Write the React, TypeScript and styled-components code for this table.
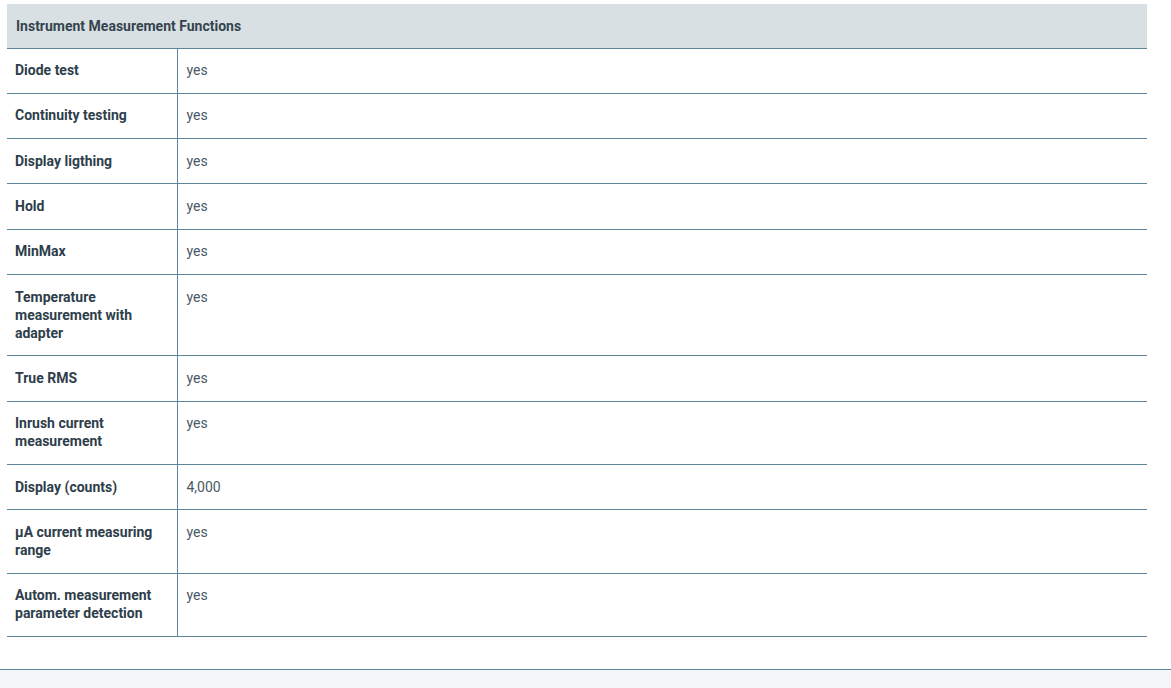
import React from "react";
import styled, { createGlobalStyle } from "styled-components";

const Colors = {
  border: "#5e8599",
  headerBg: "#d9e0e4",
  label: "#2e3e4b",
  value: "#4a5965",
  footerBg: "#f4f6f7",
};

const rows: [string, string][] = [
  ["Diode test", "yes"],
  ["Continuity testing", "yes"],
  ["Display ligthing", "yes"],
  ["Hold", "yes"],
  ["MinMax", "yes"],
  ["Temperature measurement with adapter", "yes"],
  ["True RMS", "yes"],
  ["Inrush current measurement", "yes"],
  ["Display (counts)", "4,000"],
  ["µA current measuring range", "yes"],
  ["Autom. measurement parameter detection", "yes"],
];

const GlobalStyle = createGlobalStyle`
  html, body {
    margin: 0;
    padding: 0;
    background: #ffffff;
    font-family: Roboto, "Liberation Sans", Arial, sans-serif;
  }
`;

const App: React.FunctionComponent = (): JSX.Element => {
  return (
    <>
      <GlobalStyle />
      <Page>
        <Content>
          <SpecTable>
            <colgroup>
              <LabelCol />
              <col />
            </colgroup>
            <thead>
              <tr>
                <HeaderCell colSpan={2}>Instrument Measurement Functions</HeaderCell>
              </tr>
            </thead>
            <tbody>
              {rows.map(([label, value]) => (
                <Row key={label}>
                  <LabelCell>{label}</LabelCell>
                  <ValueCell>{value}</ValueCell>
                </Row>
              ))}
            </tbody>
          </SpecTable>
        </Content>
        <Footer />
      </Page>
    </>
  );
};
export default App;

const Page = styled.div`
  display: flex;
  flex-direction: column;
  min-height: 688px;
`;

const Content = styled.div`
  padding: 4px 24px 32px 7px;
`;

const SpecTable = styled.table`
  width: 1140px;
  border-collapse: collapse;
  table-layout: fixed;
  font-size: 14px;
  line-height: 18px;
`;

const LabelCol = styled.col`
  width: 170px;
`;

const HeaderCell = styled.th`
  background: ${Colors.headerBg};
  color: #34444f;
  font-weight: 700;
  text-align: left;
  height: 44px;
  padding: 0 9px;
  box-sizing: border-box;
  border-bottom: 1px solid ${Colors.border};
`;

const Row = styled.tr`
  border-bottom: 1px solid ${Colors.border};
`;

const LabelCell = styled.td`
  box-sizing: border-box;
  padding: 12.65px 8px 13.7px;
  vertical-align: top;
  color: ${Colors.label};
  font-weight: 700;
  border-right: 1px solid ${Colors.border};
`;

const ValueCell = styled.td`
  padding: 12.65px 9px 13.7px;
  vertical-align: top;
  color: ${Colors.value};
  font-weight: 400;
`;

const Footer = styled.div`
  flex: 1;
  border-top: 1px solid ${Colors.border};
  background: ${Colors.footerBg};
`;
